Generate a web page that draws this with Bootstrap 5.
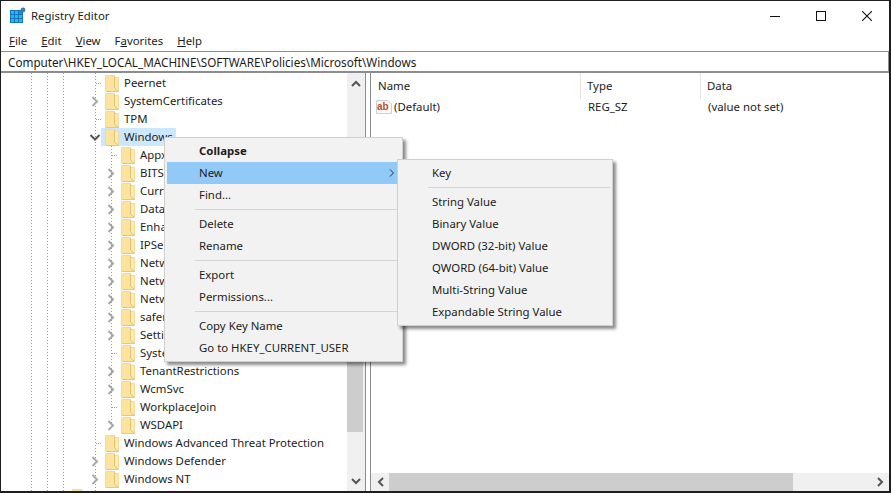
<!DOCTYPE html>
<html lang="en">
<head>
    <meta charset="UTF-8">
    <meta name="viewport" content="width=device-width, initial-scale=1.0">
    <title>Registry Editor</title>
    <link href="https://cdn.jsdelivr.net/npm/bootstrap@5.3.0/dist/css/bootstrap.min.css" rel="stylesheet">
    <style>
        html, body { height: 100%; overflow: hidden; }
        body { position: relative; font-family: "Noto Sans", "Liberation Sans", sans-serif; font-size: 11.4px; line-height: 18px; color: #1c1c1c; background: #fff; }
        .win-frame { height: 493px; border-style: solid; border-color: #1e1e1e; border-width: 1px 2px 2px 1px; }
        .win-title { height: 29px; padding-left: 9px; }
        .win-title-text { margin-left: 5px; }
        .win-ctls { margin-right: -1px; }
        .win-ctl { width: 46px; }
        .win-menubar { height: 21px; padding-left: 8px; gap: 14px; }
        .win-address { height: 22px; border-top: 1px solid #8c8c8c; border-bottom: 2px solid #8c8c8c; border-right: 1px solid #8c8c8c; padding-left: 7px; white-space: nowrap; font-size: 11.7px; }
        .win-main { min-height: 0; }
        .tree-pane { width: 364px; }
        .tree-list { width: 346px; padding-top: 1px; overflow: hidden; white-space: nowrap;
            background-image: repeating-linear-gradient(to bottom, #9a9a9a 0 1px, transparent 1px 3px), repeating-linear-gradient(to bottom, #9a9a9a 0 1px, transparent 1px 3px), repeating-linear-gradient(to bottom, #9a9a9a 0 1px, transparent 1px 3px), repeating-linear-gradient(to bottom, #9a9a9a 0 1px, transparent 1px 3px);
            background-size: 1px 100%; background-repeat: no-repeat; background-position: 30px 0, 46px 0, 62px 0, 94px 0; }
        .tree-group { background-image: repeating-linear-gradient(to bottom, #9a9a9a 0 1px, transparent 1px 3px); background-size: 1px calc(100% - 9px); background-repeat: no-repeat; background-position: 110px 0; }
        .tree-row { height: 18px; }
        .tree-l0 { padding-left: 55px; }
        .tree-l1 { padding-left: 88px; }
        .tree-l2 { padding-left: 104px; }
        .tree-slot { width: 12px; height: 18px; flex: none; }
        .tree-dots { width: 6px; height: 1px; margin-left: 7px; background-image: repeating-linear-gradient(to right, #9a9a9a 0 1px, transparent 1px 2px); }
        .tree-label { padding-left: 4px; height: 18px; }
        .tree-label.is-open { background: #cce8ff; width: 75px; }
        .tree-folder { width: 14px; height: 17px; margin-right: 5px; flex: none; }
        .vscroll { width: 18px; background: #f0f0f0; }
        .scroll-btn { height: 20px; }
        .vscroll-thumb { height: 231px; width: 16px; background: #cdcdcd; }
        .vscroll-end { height: 39px; }
        .split-line { width: 1px; background: #8c8c8c; }
        .split-gap { width: 4px; }
        .list-pane { border-left: 1px solid #8c8c8c; }
        .list-head { height: 26px; }
        .col-name { width: 210px; padding-left: 7px; border-right: 1px solid #e5e5e5; }
        .col-type { width: 120px; padding-left: 6px; border-right: 1px solid #e5e5e5; }
        .col-data { padding-left: 6px; }
        .list-row { height: 18px; margin-top: -1px; }
        .list-name { width: 211px; padding-left: 5px; }
        .list-icon { margin-right: 2px; }
        .list-type { width: 120px; padding-left: 6px; }
        .list-data { padding-left: 6px; }
        .hscroll { height: 18px; background: #f0f0f0; padding-left: 1px; }
        .hscroll-btn { width: 17px; }
        .hscroll-thumb { width: 404px; background: #cdcdcd; }
        .ctx-menu { position: absolute; background: #f2f2f2; border: 1px solid #cfcfcf; box-shadow: 3px 3px 3px rgba(0, 0, 0, .45); white-space: nowrap; }
        .ctx-main { left: 164px; top: 137px; width: 239px; height: 225px; padding: 2px 2px; }
        .ctx-sub { left: 397px; top: 159px; width: 216px; height: 167px; padding: 2px 2px; }
        .ctx-item { height: 22px; line-height: 22px; padding-left: 32px; }
        .ctx-sub .ctx-item { padding-left: 32px; }
        .ctx-item.is-hot { background: #91c9f7; }
        .ctx-sep { height: 7px; padding-top: 3px; margin-left: 28px; }
        .ctx-sub .ctx-sep { margin-left: 28px; }
        .ctx-sep div { height: 1px; background: #d4d4d4; }
        .ctx-arrow { margin-right: 6px; }
    </style>
</head>
<body>
    <svg width="0" height="0" class="position-absolute">
        <symbol id="folder" viewBox="0 0 14 17">
            <path d="M0.5 0.5H9.5V2.5H13.5V16.5H0.5Z" fill="#fde49e" stroke="#f5da92"/>
            <path d="M10 3V12.5L13 15.5V3Z" fill="#fdeab4"/>
            <path d="M9.5 1V13L13 16" fill="none" stroke="#e6c272"/>
            <path d="M1 16.5H13.5" stroke="#e9c678"/>
        </symbol>
        <symbol id="chev-right" viewBox="0 0 12 18">
            <path d="M3.5 5L8 9.5L3.5 14" fill="none" stroke="#a8a8a8" stroke-width="2"/>
        </symbol>
        <symbol id="chev-down" viewBox="0 0 12 18">
            <path d="M1.5 7L6 11.5L10.5 7" fill="none" stroke="#555" stroke-width="2"/>
        </symbol>
    </svg>

    <div class="win-frame d-flex flex-column">
        <!-- title bar -->
        <div class="win-title d-flex align-items-center flex-shrink-0">
            <svg width="16" height="17" viewBox="0 0 16 17">
                <rect x="0" y="3" width="13" height="13" fill="#0f78bd"/>
                <rect x="1" y="4" width="3" height="3" fill="#36b0e8"/><rect x="5" y="4" width="3" height="3" fill="#36b0e8"/><rect x="9" y="4" width="3" height="3" fill="#1d8fd3"/>
                <rect x="1" y="8" width="3" height="3" fill="#36b0e8"/><rect x="5" y="8" width="3" height="3" fill="#36b0e8"/><rect x="9" y="8" width="3" height="3" fill="#36b0e8"/>
                <rect x="1" y="12" width="3" height="3" fill="#36b0e8"/><rect x="5" y="12" width="3" height="3" fill="#36b0e8"/><rect x="9" y="12" width="3" height="3" fill="#36b0e8"/>
                <circle cx="13" cy="3" r="2.4" fill="#3f7ea6"/>
            </svg>
            <span class="win-title-text">Registry Editor</span>
            <div class="win-ctls ms-auto d-flex">
                <div class="win-ctl d-flex align-items-center justify-content-center">
                    <svg width="10" height="10" viewBox="0 0 10 10"><path d="M0 5.5H10" stroke="#111"/></svg>
                </div>
                <div class="win-ctl d-flex align-items-center justify-content-center">
                    <svg width="10" height="10" viewBox="0 0 10 10"><rect x=".5" y=".5" width="9" height="9" fill="none" stroke="#111"/></svg>
                </div>
                <div class="win-ctl d-flex align-items-center justify-content-center">
                    <svg width="10" height="10" viewBox="0 0 10 10"><path d="M0 0L10 10M10 0L0 10" stroke="#111" stroke-width="1.1"/></svg>
                </div>
            </div>
        </div>

        <!-- menu bar -->
        <div class="win-menubar d-flex align-items-center flex-shrink-0">
            <span><u>F</u>ile</span>
            <span><u>E</u>dit</span>
            <span><u>V</u>iew</span>
            <span>F<u>a</u>vorites</span>
            <span><u>H</u>elp</span>
        </div>

        <!-- address bar -->
        <div class="win-address d-flex align-items-center flex-shrink-0">Computer\HKEY_LOCAL_MACHINE\SOFTWARE\Policies\Microsoft\Windows</div>

        <div class="win-main d-flex flex-grow-1 overflow-hidden">
            <!-- tree -->
            <div class="tree-pane d-flex flex-shrink-0">
                <div class="tree-list">
                    <div class="tree-row d-flex align-items-center tree-l1"><span class="tree-slot d-flex align-items-center"><span class="tree-dots"></span></span><span class="tree-label d-flex align-items-center"><svg class="tree-folder"><use href="#folder"/></svg>Peernet</span></div>
                    <div class="tree-row d-flex align-items-center tree-l1"><svg class="tree-slot"><use href="#chev-right"/></svg><span class="tree-label d-flex align-items-center"><svg class="tree-folder"><use href="#folder"/></svg>SystemCertificates</span></div>
                    <div class="tree-row d-flex align-items-center tree-l1"><span class="tree-slot d-flex align-items-center"><span class="tree-dots"></span></span><span class="tree-label d-flex align-items-center"><svg class="tree-folder"><use href="#folder"/></svg>TPM</span></div>
                    <div class="tree-row d-flex align-items-center tree-l1"><svg class="tree-slot"><use href="#chev-down"/></svg><span class="tree-label is-open d-flex align-items-center"><svg class="tree-folder"><use href="#folder"/></svg>Windows</span></div>
                    <div class="tree-group">
                        <div class="tree-row d-flex align-items-center tree-l2"><span class="tree-slot d-flex align-items-center"><span class="tree-dots"></span></span><span class="tree-label d-flex align-items-center"><svg class="tree-folder"><use href="#folder"/></svg>Appx</span></div>
                        <div class="tree-row d-flex align-items-center tree-l2"><svg class="tree-slot"><use href="#chev-right"/></svg><span class="tree-label d-flex align-items-center"><svg class="tree-folder"><use href="#folder"/></svg>BITS</span></div>
                        <div class="tree-row d-flex align-items-center tree-l2"><svg class="tree-slot"><use href="#chev-right"/></svg><span class="tree-label d-flex align-items-center"><svg class="tree-folder"><use href="#folder"/></svg>Curr</span></div>
                        <div class="tree-row d-flex align-items-center tree-l2"><svg class="tree-slot"><use href="#chev-right"/></svg><span class="tree-label d-flex align-items-center"><svg class="tree-folder"><use href="#folder"/></svg>Data</span></div>
                        <div class="tree-row d-flex align-items-center tree-l2"><svg class="tree-slot"><use href="#chev-right"/></svg><span class="tree-label d-flex align-items-center"><svg class="tree-folder"><use href="#folder"/></svg>Enha</span></div>
                        <div class="tree-row d-flex align-items-center tree-l2"><svg class="tree-slot"><use href="#chev-right"/></svg><span class="tree-label d-flex align-items-center"><svg class="tree-folder"><use href="#folder"/></svg>IPSe</span></div>
                        <div class="tree-row d-flex align-items-center tree-l2"><svg class="tree-slot"><use href="#chev-right"/></svg><span class="tree-label d-flex align-items-center"><svg class="tree-folder"><use href="#folder"/></svg>Netw</span></div>
                        <div class="tree-row d-flex align-items-center tree-l2"><svg class="tree-slot"><use href="#chev-right"/></svg><span class="tree-label d-flex align-items-center"><svg class="tree-folder"><use href="#folder"/></svg>Netw</span></div>
                        <div class="tree-row d-flex align-items-center tree-l2"><svg class="tree-slot"><use href="#chev-right"/></svg><span class="tree-label d-flex align-items-center"><svg class="tree-folder"><use href="#folder"/></svg>Netw</span></div>
                        <div class="tree-row d-flex align-items-center tree-l2"><svg class="tree-slot"><use href="#chev-right"/></svg><span class="tree-label d-flex align-items-center"><svg class="tree-folder"><use href="#folder"/></svg>safer</span></div>
                        <div class="tree-row d-flex align-items-center tree-l2"><svg class="tree-slot"><use href="#chev-right"/></svg><span class="tree-label d-flex align-items-center"><svg class="tree-folder"><use href="#folder"/></svg>Setti</span></div>
                        <div class="tree-row d-flex align-items-center tree-l2"><span class="tree-slot d-flex align-items-center"><span class="tree-dots"></span></span><span class="tree-label d-flex align-items-center"><svg class="tree-folder"><use href="#folder"/></svg>Syste</span></div>
                        <div class="tree-row d-flex align-items-center tree-l2"><svg class="tree-slot"><use href="#chev-right"/></svg><span class="tree-label d-flex align-items-center"><svg class="tree-folder"><use href="#folder"/></svg>TenantRestrictions</span></div>
                        <div class="tree-row d-flex align-items-center tree-l2"><svg class="tree-slot"><use href="#chev-right"/></svg><span class="tree-label d-flex align-items-center"><svg class="tree-folder"><use href="#folder"/></svg>WcmSvc</span></div>
                        <div class="tree-row d-flex align-items-center tree-l2"><span class="tree-slot d-flex align-items-center"><span class="tree-dots"></span></span><span class="tree-label d-flex align-items-center"><svg class="tree-folder"><use href="#folder"/></svg>WorkplaceJoin</span></div>
                        <div class="tree-row d-flex align-items-center tree-l2"><svg class="tree-slot"><use href="#chev-right"/></svg><span class="tree-label d-flex align-items-center"><svg class="tree-folder"><use href="#folder"/></svg>WSDAPI</span></div>
                    </div>
                    <div class="tree-row d-flex align-items-center tree-l1"><span class="tree-slot d-flex align-items-center"><span class="tree-dots"></span></span><span class="tree-label d-flex align-items-center"><svg class="tree-folder"><use href="#folder"/></svg>Windows Advanced Threat Protection</span></div>
                    <div class="tree-row d-flex align-items-center tree-l1"><svg class="tree-slot"><use href="#chev-right"/></svg><span class="tree-label d-flex align-items-center"><svg class="tree-folder"><use href="#folder"/></svg>Windows Defender</span></div>
                    <div class="tree-row d-flex align-items-center tree-l1"><svg class="tree-slot"><use href="#chev-right"/></svg><span class="tree-label d-flex align-items-center"><svg class="tree-folder"><use href="#folder"/></svg>Windows NT</span></div>
                    <div class="tree-row d-flex align-items-center tree-l0"><span class="tree-slot"></span><span class="tree-label d-flex align-items-center"><svg class="tree-folder"><use href="#folder"/></svg></span></div>
                </div>
                <!-- tree scrollbar -->
                <div class="vscroll d-flex flex-column align-items-start">
                    <div class="scroll-btn d-flex align-items-center justify-content-center w-100">
                        <svg width="10" height="7" viewBox="0 0 10 7"><path d="M1 6L5 2L9 6" fill="none" stroke="#555" stroke-width="2"/></svg>
                    </div>
                    <div class="flex-grow-1"></div>
                    <div class="vscroll-thumb"></div>
                    <div class="vscroll-end"></div>
                    <div class="scroll-btn d-flex align-items-center justify-content-center w-100">
                        <svg width="10" height="7" viewBox="0 0 10 7"><path d="M1 1L5 5L9 1" fill="none" stroke="#555" stroke-width="2"/></svg>
                    </div>
                </div>
            </div>
            <div class="split-line"></div>
            <div class="split-gap"></div>

            <!-- values -->
            <div class="list-pane flex-grow-1 d-flex flex-column">
                <div class="list-head d-flex">
                    <div class="col-name d-flex align-items-center">Name</div>
                    <div class="col-type d-flex align-items-center">Type</div>
                    <div class="col-data d-flex align-items-center">Data</div>
                </div>
                <div class="list-row d-flex align-items-center">
                    <div class="list-name d-flex align-items-center">
                        <svg class="list-icon" width="16" height="16" viewBox="0 0 16 16">
                            <path d="M.5 1.5H12L15.5 5V14.5H.5Z" fill="#fdf8f4" stroke="#cfcfcf"/>
                            <text x="1" y="11" font-family="Liberation Sans, sans-serif" font-size="10" font-weight="700" fill="#b8522f">ab</text>
                        </svg>
                        <span>(Default)</span>
                    </div>
                    <div class="list-type">REG_SZ</div>
                    <div class="list-data">(value not set)</div>
                </div>
                <div class="flex-grow-1"></div>
                <div class="hscroll d-flex">
                    <div class="hscroll-btn d-flex align-items-center justify-content-center">
                        <svg width="7" height="10" viewBox="0 0 7 10"><path d="M6 1L2 5L6 9" fill="none" stroke="#555" stroke-width="2"/></svg>
                    </div>
                    <div class="hscroll-thumb"></div>
                    <div class="flex-grow-1"></div>
                    <div class="hscroll-btn d-flex align-items-center justify-content-center">
                        <svg width="7" height="10" viewBox="0 0 7 10"><path d="M1 1L5 5L1 9" fill="none" stroke="#555" stroke-width="2"/></svg>
                    </div>
                </div>
            </div>
        </div>
    </div>

    <!-- context menu -->
    <div class="ctx-menu ctx-main">
        <div class="ctx-item fw-bold">Collapse</div>
        <div class="ctx-item is-hot d-flex align-items-center justify-content-between">
            <span>New</span>
            <svg class="ctx-arrow" width="5" height="8" viewBox="0 0 5 8"><path d="M1 .5L4.5 4L1 7.5" fill="none" stroke="#333"/></svg>
        </div>
        <div class="ctx-item">Find...</div>
        <div class="ctx-sep"><div></div></div>
        <div class="ctx-item">Delete</div>
        <div class="ctx-item">Rename</div>
        <div class="ctx-sep"><div></div></div>
        <div class="ctx-item">Export</div>
        <div class="ctx-item">Permissions...</div>
        <div class="ctx-sep"><div></div></div>
        <div class="ctx-item">Copy Key Name</div>
        <div class="ctx-item">Go to HKEY_CURRENT_USER</div>
    </div>
    <div class="ctx-menu ctx-sub">
        <div class="ctx-item">Key</div>
        <div class="ctx-sep"><div></div></div>
        <div class="ctx-item">String Value</div>
        <div class="ctx-item">Binary Value</div>
        <div class="ctx-item">DWORD (32-bit) Value</div>
        <div class="ctx-item">QWORD (64-bit) Value</div>
        <div class="ctx-item">Multi-String Value</div>
        <div class="ctx-item">Expandable String Value</div>
    </div>

    <script src="https://cdn.jsdelivr.net/npm/bootstrap@5.3.0/dist/js/bootstrap.bundle.min.js"></script>
</body>
</html>
